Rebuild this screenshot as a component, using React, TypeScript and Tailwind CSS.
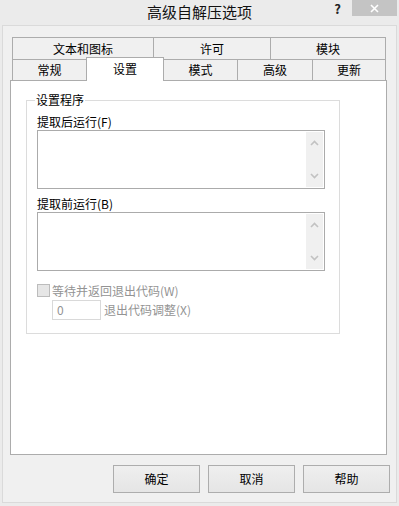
import React from "react";

const font = { fontFamily: '"Noto Sans CJK SC", "Noto Sans", sans-serif' };

function ScrollArea() {
  return (
    <div className="flex h-[59px] w-[288px] border border-[#ababab] bg-white">
      <div className="flex-1" />
      <div className="my-px mr-px flex w-[17px] flex-col items-center justify-between bg-[#f0f0f0] py-[8px]">
        <svg width="9" height="6" viewBox="0 0 9 6">
          <path d="M1 5 L4.5 1.5 L8 5" fill="none" stroke="#c2c2c2" strokeWidth="1.6" />
        </svg>
        <svg width="9" height="6" viewBox="0 0 9 6">
          <path d="M1 1 L4.5 4.5 L8 1" fill="none" stroke="#c2c2c2" strokeWidth="1.6" />
        </svg>
      </div>
    </div>
  );
}

function Btn({ label }: { label: string }) {
  return (
    <div className="flex h-[28px] w-[87px] items-center justify-center border border-[#adadad] bg-gradient-to-b from-[#efefef] to-[#e5e5e5] text-[12px] leading-[16px] text-black">
      {label}
    </div>
  );
}

export default function App() {
  const tab = "flex items-center justify-center border-[#acacac] bg-[#f0f0f0] text-[12px] leading-[16px] text-black";
  return (
    <div className="h-[506px] w-[399px] overflow-hidden bg-[#ebebeb]" style={font}>
      {/* title bar */}
      <div className="flex h-[25px]">
        <div className="w-[74px]" />
        <div className="flex-1 pt-[3px] text-center text-[15px] leading-[18px] text-[#111]">高级自解压选项</div>
        <div className="flex w-[74px] items-start">
          <div className="flex h-[16px] w-[27px] items-center justify-center pr-[2px] pt-[1px]">
            <span className="text-[13px] font-bold leading-[14px] text-[#222]">?</span>
          </div>
          <div className="flex h-[16px] w-[45px] items-center justify-center bg-[#c4c4c4]">
            <svg width="9" height="9" viewBox="0 0 9 9">
              <path d="M1 1 L8 8 M8 1 L1 8" stroke="#ffffff" strokeWidth="1.6" />
            </svg>
          </div>
          <div className="w-[2px]" />
        </div>
      </div>

      {/* client */}
      <div className="ml-[2px] flex h-[478px] w-[395px] flex-col border border-[#dadada] bg-[#f0f0f0]">
        <div className="ml-[9px] mt-[11px] flex flex-col">
          <div className="flex h-[22px]">
            <div className={`${tab} w-[142px] border-l border-r border-t`}>文本和图标</div>
            <div className={`${tab} w-[117px] border-r border-t`}>许可</div>
            <div className={`${tab} w-[115px] border-r border-t`}>模块</div>
          </div>
          <div className="flex h-[21px] items-end">
            <div className={`${tab} h-[21px] w-[74px] border-l border-t`}>常规</div>
            <div className="relative z-10 -mb-px flex h-[24px] w-[78px] items-start justify-center border-l border-r border-t border-[#acacac] bg-white pt-[3px] text-[12px] leading-[16px] text-black">
              设置
            </div>
            <div className={`${tab} h-[21px] w-[74px] border-r border-t`}>模式</div>
            <div className={`${tab} h-[21px] w-[75px] border-r border-t`}>高级</div>
            <div className={`${tab} h-[21px] w-[73px] border-r border-t`}>更新</div>
          </div>
        </div>

        <div className="ml-[7px] h-[375px] w-[377px] border border-[#acacac] bg-white">
          <div className="ml-[15px] mt-[19px] flex h-[234px] w-[314px] flex-col border border-[#dcdcdc] pl-[10px] text-[12px] leading-[16px] text-black">
            <div className="-ml-[2px] -mt-[9px] h-[16px] self-start bg-white px-[1px]">设置程序</div>
            <div className="mt-[6px] h-[16px]">提取后运行(F)</div>
            <ScrollArea />
            <div className="mt-[7px] h-[16px]">提取前运行(B)</div>
            <ScrollArea />
            <div className="mt-[13px] flex h-[13px] items-center">
              <div className="h-[13px] w-[13px] border border-[#bcbcbc] bg-[#e6e6e6]" />
              <span className="ml-[2px] text-[#939393]">等待并返回退出代码(W)</span>
            </div>
            <div className="ml-[15px] mt-[3px] flex items-center">
              <div className="flex h-[20px] w-[49px] items-center border border-[#d9d9d9] bg-white pl-[4px] text-[#939393]">0</div>
              <span className="ml-[3px] text-[#939393]">退出代码调整(X)</span>
            </div>
          </div>
        </div>

        <div className="mt-[10px] flex justify-end gap-[8px] pr-[6px]">
          <Btn label="确定" />
          <Btn label="取消" />
          <Btn label="帮助" />
        </div>
      </div>
    </div>
  );
}
